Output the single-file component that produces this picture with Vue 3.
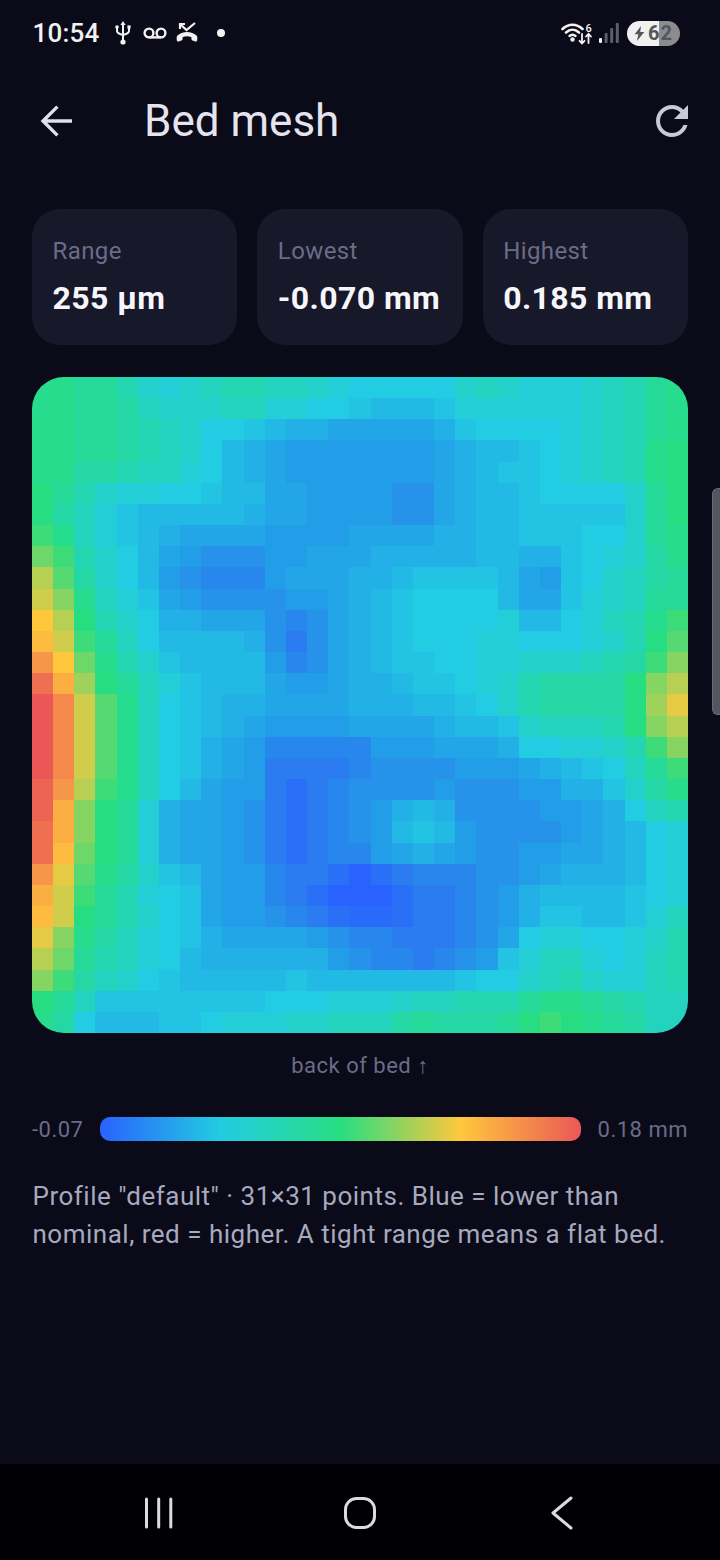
<script setup>
import { computed } from "vue";

// one char per probe point, base 36: 0 blue, 9 cyan, h green, q yellow, z red
// "." and ":" sit between 0 and 1, the deep blue needs the extra steps
const rows = [
  "ggffdbabcddccba99999bcbaaabcdfg",
  "ggffecbbbccaa9987778aaaaaabcdfg",
  "ggffedcb99876655555689999abcdfg",
  "ggffedcb97654444444567789abcdgh",
  "ggeedcca97654444444567889abcdgh",
  "hfdbaa9987755444433567789999bfh",
  "heca877777655444433567788888bfh",
  "igca876555544445555667788899bfg",
  "kidb97543334455566666776689abeg",
  "njeb97432224555667888875489bcef",
  "olgca854333344567899997558abcff",
  "qnhdb96655532356789999a779acdgi",
  "roifc9777763135678999aa999abdhj",
  "uqkgdb877774235678899aabbbcdeil",
  "xsmhfca87775445667889abdeeeehln",
  "zvojgc9876655556667789bdeeeehmp",
  "zvojgc98765444455556778bcccdhln",
  "zvojgc9865422222444555699aabdil",
  "zvojgc9865411112333344456789cfi",
  "yunigc975441:123333433344668beg",
  "yslhfa655431:1234676333344569cd",
  "xslhfa655431:12347874333345679a",
  "xrkhfa655431:12245654334455679a",
  "upjgeb87544211:0:1222334566679a",
  "soifda9854421:000:112346777789a",
  "rohfdb98544321:..:11234688778ac",
  "plgeca986555543221112359aa99abd",
  "nkfdca97666666432212348acca9acd",
  "liecb987777787777777899bcdbaacd",
  "hfc88888888999aaabccdddfggfedcc",
  "ge9777889aaabbcccefeeefhihgfecc",
];

const low = { ".": 0.3, ":": 0.55 };

const stops = [
  [0, [41, 98, 255]],
  [1, [42, 124, 240]],
  [2, [40, 135, 236]],
  [3, [38, 146, 234]],
  [4, [34, 157, 232]],
  [9, [34, 204, 226]],
  [17, [38, 222, 129]],
  [26, [255, 200, 60]],
  [35, [235, 87, 87]],
];

function colorOf(v) {
  let i = 0;
  while (i < stops.length - 2 && v > stops[i + 1][0]) i++;
  const [a, ca] = stops[i];
  const [b, cb] = stops[i + 1];
  const t = (v - a) / (b - a);
  const c = ca.map((x, k) => Math.round(x + (cb[k] - x) * t));
  return `rgb(${c[0]},${c[1]},${c[2]})`;
}

const cells = computed(() =>
  rows.flatMap((r) => r.split("").map((ch) => colorOf(low[ch] ?? parseInt(ch, 36))))
);

const stats = [
  { label: "Range", value: "255 µm" },
  { label: "Lowest", value: "-0.070 mm" },
  { label: "Highest", value: "0.185 mm" },
];
</script>

<template>
  <div class="screen">
    <div class="status">
      <span class="clock">10:54</span>
      <svg class="ic-usb" width="16" height="24" viewBox="0 0 16 24" fill="none" stroke="#f2f2f2" stroke-width="2">
        <path d="M8 3v17M2 7v3c0 2 2 3 6 4 4-1 6-2 6-4V7" />
        <path d="M8 0l2.600 4H5.400z" fill="#f2f2f2" stroke="none" />
        <circle cx="8" cy="21" r="2.600" fill="#f2f2f2" stroke="none" />
        <circle cx="2" cy="6" r="1.800" fill="#f2f2f2" stroke="none" />
        <path d="M12.400 4.400h3.200v3.200h-3.200z" fill="#f2f2f2" stroke="none" />
      </svg>
      <svg class="ic-vm" width="24" height="12" viewBox="0 0 24 12" fill="none" stroke="#f2f2f2" stroke-width="2.400">
        <circle cx="6" cy="6" r="4.400" />
        <circle cx="18" cy="6" r="4.400" />
        <path d="M6 10.400h12" />
      </svg>
      <svg class="ic-call" width="24" height="22" viewBox="0 0 24 22" fill="none">
        <path d="M3 13c5.500-4 12.500-4 18 0 1.500 1.100 1.500 2.800 1.200 5.200-.2 1-1 1.500-2 1.200l-2.600-.8c-.9-.3-1.300-1-1.200-2l.1-1.400c-3-1.200-6-1.200-9 0l.1 1.400c.1 1-.3 1.700-1.200 2l-2.600.8c-1 .3-1.800-.2-2-1.200C1.500 15.800 1.500 14.100 3 13z" fill="#f2f2f2" />
        <path d="M5 2l6.500 6L20 1" stroke="#f2f2f2" stroke-width="2.200" />
        <path d="M5 7V2h5" stroke="#f2f2f2" stroke-width="2.200" />
      </svg>
      <span class="dot"></span>
      <span class="grow"></span>
      <svg class="ic-wifi" width="32" height="25" viewBox="0 0 32 25" fill="none" stroke="#f2f2f2" stroke-linecap="round">
        <path d="M1.500 8C7.500 2.300 15.500 2.300 21.500 8" stroke-width="2.600" />
        <path d="M5 11.500c4-3.700 9-3.700 13 0" stroke-width="2.600" />
        <path d="M8.500 15c2-1.800 4-1.800 6 0" stroke-width="2.400" />
        <circle cx="11.500" cy="18.500" r="2.200" fill="#f2f2f2" stroke="none" />
        <path d="M21 13v9M18.500 19.800l2.500 2.700 2.500-2.700M27.500 22v-9M25 15.500l2.500-2.700 2.500 2.700" stroke-width="1.800" />
        <text x="24.500" y="10.500" fill="#f2f2f2" stroke="none" font-size="11" font-family="Roboto, sans-serif" font-weight="500">6</text>
      </svg>
      <svg class="ic-signal" width="20" height="20" viewBox="0 0 20 20" fill="#5f5f66">
        <rect x="0" y="15" width="3" height="5" rx="1" fill="#f2f2f2" />
        <rect x="5.600" y="10" width="3" height="10" rx="1" />
        <rect x="11.200" y="5" width="3" height="15" rx="1" />
        <rect x="16.800" y="0" width="3" height="20" rx="1" />
      </svg>
      <div class="battery">
        <svg width="11" height="15" viewBox="0 0 13 20">
          <path d="M8.500 0L0 11h5l-2 9 10-12H7.500z" fill="#55555c" />
        </svg>
        <span>62</span>
      </div>
    </div>

    <div class="appbar">
      <svg class="icon" width="48" height="48" viewBox="0 0 24 24" fill="none" stroke="#e0e0ea" stroke-width="1.700">
        <path d="M20 12H5.500M12.700 4.800L5.500 12l7.200 7.200" />
      </svg>
      <h1 class="title">Bed mesh</h1>
      <svg class="icon" width="48" height="48" viewBox="0 0 24 24">
        <path fill="#c9cad8" d="M17.650 6.350C16.200 4.900 14.210 4 12 4c-4.420 0-7.990 3.580-7.990 8s3.570 8 7.990 8c3.730 0 6.840-2.550 7.730-6h-2.080c-.82 2.330-3.040 4-5.650 4-3.310 0-6-2.690-6-6s2.690-6 6-6c1.660 0 3.140.69 4.220 1.780L13 11h7V4l-2.350 2.350z" />
      </svg>
    </div>

    <div class="stats">
      <div v-for="s in stats" :key="s.label" class="stat">
        <div class="stat-label">{{ s.label }}</div>
        <div class="stat-value">{{ s.value }}</div>
      </div>
    </div>

    <div class="mesh">
      <div v-for="(c, i) in cells" :key="i" :style="{ background: c }"></div>
    </div>

    <div class="back-label">back of bed ↑</div>

    <div class="legend">
      <span>-0.07</span>
      <div class="legend-bar"></div>
      <span>0.18 mm</span>
    </div>

    <p class="note">Profile "default" · 31×31 points. Blue = lower than nominal, red = higher. A tight range means a flat bed.</p>

    <div class="navbar">
      <svg width="30" height="32" viewBox="0 0 30 32" stroke="#dcdcdc" stroke-width="3" stroke-linecap="round">
        <path d="M3.500 2v28M15.700 2v28M27.800 2v28" />
      </svg>
      <svg width="32" height="32" viewBox="0 0 32 32" fill="none" stroke="#dcdcdc" stroke-width="3">
        <rect x="1.500" y="1.500" width="29" height="29" rx="11" />
      </svg>
      <svg width="22" height="34" viewBox="0 0 22 34" fill="none" stroke="#dcdcdc" stroke-width="3" stroke-linecap="round" stroke-linejoin="round">
        <path d="M20 2L2 17l18 15" />
      </svg>
    </div>

    <div class="edge-handle"></div>
  </div>
</template>

<style>
html,
body {
  margin: 0;
  background: #0a0a18;
}
</style>

<style scoped>
.screen {
  position: relative;
  width: 720px;
  height: 1560px;
  overflow: hidden;
  background: #0a0a18;
  display: flex;
  flex-direction: column;
  font-family: Roboto, "Liberation Sans", sans-serif;
}

.status {
  height: 66px;
  padding: 0 40px 0 32.5px;
  display: flex;
  align-items: center;
  flex-shrink: 0;
  box-sizing: border-box;
}
.clock {
  font-size: 26px;
  font-weight: 500;
  letter-spacing: 0.2px;
  color: #f2f2f2;
  margin-right: 16px;
}
.ic-usb { margin-right: 12px; }
.ic-vm { margin-right: 8px; }
.ic-call { margin-right: 18px; }
.dot {
  width: 8px;
  height: 8px;
  border-radius: 50%;
  background: #f2f2f2;
}
.grow { flex: 1; }
.ic-wifi { margin-right: 6px; }
.ic-signal { margin-right: 8px; }
.battery {
  width: 53px;
  height: 25px;
  border-radius: 13px;
  background: linear-gradient(90deg, #f0f0f0 32px, #8c8c90 32px);
  display: flex;
  align-items: center;
  justify-content: center;
  gap: 3px;
  color: #55555c;
  font-size: 20px;
  font-weight: 700;
  letter-spacing: 1px;
  box-sizing: border-box;
}

.appbar {
  height: 110px;
  padding: 0 24px 0 32px;
  display: flex;
  align-items: center;
  flex-shrink: 0;
}
.icon { flex-shrink: 0; }
.title {
  flex: 1;
  margin: 0 0 0 64px;
  font-size: 44px;
  font-weight: 400;
  color: #e4e4ee;
}

.stats {
  margin: 33px 32px 0;
  display: grid;
  grid-template-columns: repeat(3, 1fr);
  gap: 20px;
}
.stat {
  height: 136px;
  box-sizing: border-box;
  padding: 26px 0 0 20.5px;
  border-radius: 28px;
  background: #171829;
}
.stat-label {
  font-size: 24px;
  line-height: 32px;
  color: #6a6c88;
  letter-spacing: 0.4px;
}
.stat-value {
  margin-top: 13px;
  font-size: 32px;
  line-height: 36px;
  font-weight: 700;
  letter-spacing: 0.4px;
  color: #f6f6fa;
  white-space: nowrap;
}

.mesh {
  margin: 32px 32px 0;
  width: 656px;
  height: 656px;
  border-radius: 32px;
  overflow: hidden;
  display: grid;
  grid-template-columns: repeat(31, 1fr);
  grid-template-rows: repeat(31, 1fr);
}

.back-label {
  margin-top: 19px;
  text-align: center;
  font-size: 22px;
  line-height: 28px;
  letter-spacing: 0.5px;
  color: #6a6c88;
}

.legend {
  margin: 37px 32px 0;
  height: 24px;
  display: flex;
  align-items: center;
  gap: 17px;
  font-size: 22px;
  color: #6a6c88;
  letter-spacing: 0.5px;
}
.legend-bar {
  flex: 1;
  height: 24px;
  border-radius: 10px;
  background: linear-gradient(90deg, #2962ff, #22cce2 25%, #26de81 50%, #ffc83c 75%, #eb5757);
}

.note {
  margin: 36px 32px 0 32.5px;
  font-size: 26px;
  line-height: 38px;
  letter-spacing: 0.5px;
  color: #a7a9bf;
}

.navbar {
  margin-top: auto;
  height: 96px;
  background: #000004;
  display: grid;
  grid-template-columns: repeat(3, 202px);
  justify-content: center;
  justify-items: center;
  align-items: center;
  flex-shrink: 0;
  padding-top: 2px;
  box-sizing: border-box;
}

.edge-handle {
  position: absolute;
  right: 0;
  top: 488px;
  width: 8px;
  height: 227px;
  background: #55555f;
  border: 1px solid #6a6a72;
  border-right: 0;
  border-radius: 6px 0 0 6px;
  box-sizing: border-box;
}
</style>
